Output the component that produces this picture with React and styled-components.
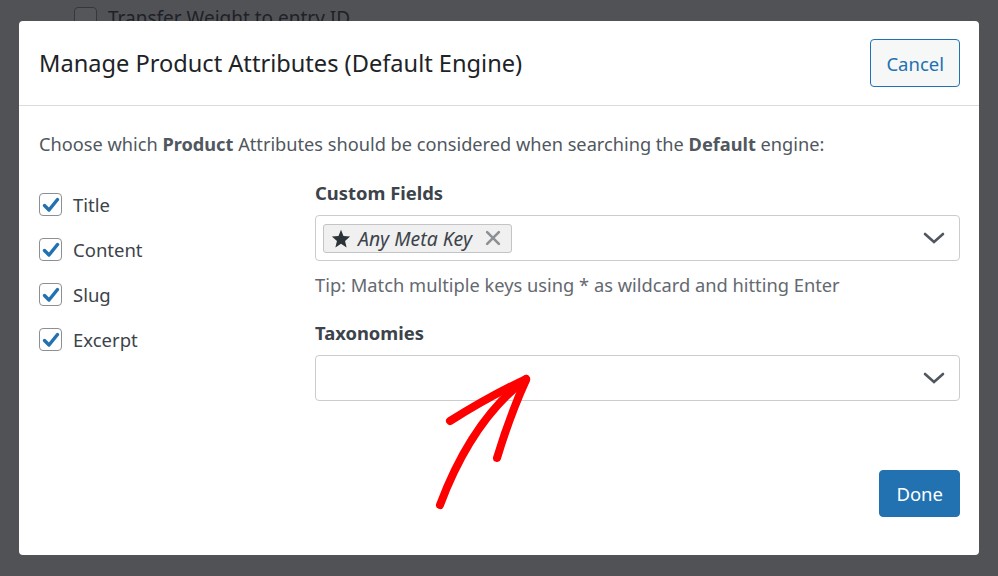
import React from "react";
import styled, { createGlobalStyle } from "styled-components";

const GlobalStyle = createGlobalStyle`
  html, body {
    margin: 0;
    padding: 0;
    width: 998px;
    height: 576px;
    overflow: hidden;
    background: #f0f0f1;
    font-family: "Noto Sans", "Open Sans", Arial, sans-serif;
  }
  * { box-sizing: border-box; }
`;

// page behind the overlay
const Page = styled.div`
  height: 576px;
  padding: 5px 0 0 74px;
`;

const PageRow = styled.label`
  display: flex;
  align-items: center;
  gap: 11px;
  font-size: 19px;
  color: #3c434a;
`;

const PageBox = styled.span`
  width: 23px;
  height: 23px;
  border: 1px solid #8c8f94;
  border-radius: 4px;
  background: #fff;
`;

const Overlay = styled.div`
  position: fixed;
  inset: 0;
  background: rgba(20, 21, 26, 0.72);
  display: flex;
  align-items: center;
  justify-content: center;
`;

const Modal = styled.div`
  position: relative;
  width: 960px;
  height: 534px;
  background: #fff;
  border-radius: 4px;
  display: flex;
  flex-direction: column;
`;

const Header = styled.div`
  height: 85px;
  border-bottom: 1px solid #dcdcde;
  display: flex;
  align-items: center;
  justify-content: space-between;
  padding: 0 19px 0 20px;
`;

const Title = styled.h2`
  margin: 0;
  font-size: 23.6px;
  font-weight: 400;
  color: #1d2327;
`;

const Button = styled.button`
  all: unset;
  height: ${(p) => (p.primary ? 45 : 46)}px;
  padding: 0 ${(p) => (p.primary ? 16 : 15)}px;
  border-radius: 4px;
  border: 1px solid #2271b1;
  background: ${(p) => (p.primary ? "#2271b1" : "#f6f7f7")};
  color: ${(p) => (p.primary ? "#fff" : "#2271b1")};
  font-size: 18.5px;
  display: flex;
  align-items: center;
  cursor: pointer;
`;

const Body = styled.div`
  flex: 1;
  padding: 26px 19px 38px 20px;
  display: flex;
  flex-direction: column;
`;

const Intro = styled.p`
  margin: 0 0 25px;
  font-size: 18.2px;
  color: #50575e;
  b { font-weight: 700; }
`;

const Columns = styled.div`
  display: grid;
  grid-template-columns: 276px 1fr;
`;

const CheckList = styled.div`
  display: flex;
  flex-direction: column;
  gap: 22px;
  padding-top: 12px;
`;

const CheckRow = styled.label`
  display: flex;
  align-items: center;
  gap: 11px;
  font-size: 18.5px;
  color: #3c434a;
  height: 23px;
`;

const Box = styled.span`
  width: 23px;
  height: 23px;
  border: 1px solid #8c8f94;
  border-radius: 4px;
  display: flex;
  align-items: center;
  justify-content: center;
`;

const Fields = styled.div`
  display: flex;
  flex-direction: column;
`;

const FieldLabel = styled.div`
  font-size: 18.4px;
  font-weight: 700;
  color: #3c434a;
  margin-bottom: 10px;
  line-height: 24px;
`;

const Select = styled.div`
  height: 46px;
  border: 1px solid #cccccc;
  border-radius: 4px;
  display: flex;
  align-items: center;
  padding: 0 14px 0 7px;
`;

const Chip = styled.span`
  display: flex;
  align-items: center;
  height: 29px;
  padding: 0 10px 0 7px;
  background: #f0f0f0;
  border: 1px solid #c3c4c7;
  border-radius: 3px;
  font-size: 19.4px;
  font-style: italic;
  color: #3c434a;
  gap: 7px;
`;

const Remove = styled.span`
  margin-left: 6px;
  display: flex;
  color: #8c8f94;
`;

const Chevron = styled.span`
  margin-left: auto;
  display: flex;
  color: #50575e;
`;

const Tip = styled.p`
  margin: 12px 0 24px;
  font-size: 18.3px;
  color: #646970;
  line-height: 24px;
`;

const Footer = styled.div`
  margin-top: auto;
  display: flex;
  justify-content: flex-end;
`;

const Annotation = styled.svg`
  position: absolute;
  left: 0;
  top: 0;
  pointer-events: none;
`;

const Check = () => (
  <svg width="18" height="16" viewBox="0 0 18 16">
    <path d="M2.5 8.5 L7 13 L15.5 2.5" fill="none" stroke="#2271b1" strokeWidth="3.4" strokeLinecap="round" strokeLinejoin="round" />
  </svg>
);

const ChevronDown = () => (
  <svg width="22" height="14" viewBox="0 0 22 14">
    <path d="M2 3 L11 11 L20 3" fill="none" stroke="currentColor" strokeWidth="2.6" strokeLinecap="round" />
  </svg>
);

const attributes = ["Title", "Content", "Slug", "Excerpt"];

export default function App() {
  return (
    <>
      <GlobalStyle />
      <Page>
        <PageRow>
          <PageBox />
          Transfer Weight to entry ID
        </PageRow>
      </Page>
      <Overlay>
        <Modal>
          <Header>
            <Title>Manage Product Attributes (Default Engine)</Title>
            <Button>Cancel</Button>
          </Header>
          <Body>
            <Intro>
              Choose which <b>Product</b> Attributes should be considered when searching the <b>Default</b> engine:
            </Intro>
            <Columns>
              <CheckList>
                {attributes.map((a) => (
                  <CheckRow key={a}>
                    <Box><Check /></Box>
                    {a}
                  </CheckRow>
                ))}
              </CheckList>
              <Fields>
                <FieldLabel>Custom Fields</FieldLabel>
                <Select>
                  <Chip>
                    <svg width="20" height="19" viewBox="0 0 24 23">
                      <path d="M12 1 L15 8.6 L23 9.2 L16.9 14.4 L18.8 22.3 L12 18 L5.2 22.3 L7.1 14.4 L1 9.2 L9 8.6 Z" fill="#2c3338" />
                    </svg>
                    Any Meta Key
                    <Remove>
                      <svg width="16" height="16" viewBox="0 0 15 15">
                        <path d="M2 2 L13 13 M13 2 L2 13" stroke="currentColor" strokeWidth="2.4" strokeLinecap="round" />
                      </svg>
                    </Remove>
                  </Chip>
                  <Chevron><ChevronDown /></Chevron>
                </Select>
                <Tip>Tip: Match multiple keys using * as wildcard and hitting Enter</Tip>
                <FieldLabel>Taxonomies</FieldLabel>
                <Select>
                  <Chevron><ChevronDown /></Chevron>
                </Select>
              </Fields>
            </Columns>
            <Footer>
              <Button primary>Done</Button>
            </Footer>
          </Body>
          <Annotation width="960" height="534" viewBox="19 21 960 534">
            <g fill="none" stroke="#ff0000" strokeWidth="8" strokeLinecap="round" strokeLinejoin="round">
              <path d="M440 505 Q 472 420 526 379" />
              <path d="M450 421 Q 490 396 526 379" />
              <path d="M497 458 Q 510 415 526 380" />
            </g>
          </Annotation>
        </Modal>
      </Overlay>
    </>
  );
}
